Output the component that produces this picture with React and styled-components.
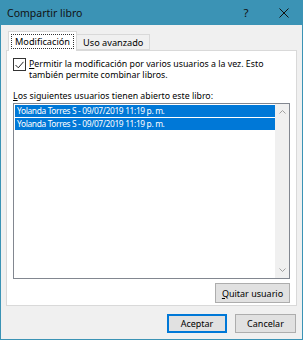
import React from 'react';
import styled, { createGlobalStyle } from 'styled-components';

const Global = createGlobalStyle`
  body {
    margin: 0;
    background: #ffffff;
    font-family: "Noto Sans", "Open Sans", sans-serif;
  }
`;

const Window = styled.div`
  width: 303px;
  height: 340px;
  box-sizing: border-box;
  border: 1px solid #3b93b5;
  border-top: none;
  background: #f0f0f0;
  display: flex;
  flex-direction: column;
  font-size: 8.8px;
  color: #000;
`;

const TitleBar = styled.div`
  height: 25px;
  flex: none;
  background: #3b93b5;
  display: flex;
  align-items: center;
  padding-left: 7px;
  margin: 0 -1px;
`;

const Title = styled.span`
  flex: 1;
  font-size: 10.5px;
  color: #111;
`;

const TitleButton = styled.div`
  width: 38px;
  height: 25px;
  display: flex;
  align-items: center;
  justify-content: center;
  font-size: 11.5px;
  color: #111;
`;

const Body = styled.div`
  padding: 6px 5px 0 5px;
  display: flex;
  flex-direction: column;
`;

const TabRow = styled.div`
  display: flex;
  align-items: flex-end;
  height: 19px;
  flex: none;
  padding-left: 2px;
`;

const Tab = styled.div`
  box-sizing: border-box;
  height: ${p => (p.$active ? '20px' : '16px')};
  margin-bottom: ${p => (p.$active ? '-1px' : '0')};
  padding: ${p => (p.$active ? '3px 3px 0' : '1px 6px 0')};
  background: ${p => (p.$active ? '#ffffff' : '#f0f0f0')};
  border: 1px solid #d9d9d9;
  border-bottom: ${p => (p.$active ? 'none' : '1px solid #d9d9d9')};
  margin-left: ${p => (p.$active ? '0' : '-1px')};
  position: relative;
  z-index: ${p => (p.$active ? 1 : 0)};
  font-size: 9.2px;
  line-height: 13px;
`;

const FocusLabel = styled.span`
  display: inline-block;
  padding: 0 3px;
  height: 13px;
  line-height: 13px;
  outline: 1px dotted #333;
`;

const Panel = styled.div`
  height: 256px;
  flex: none;
  box-sizing: border-box;
  background: #ffffff;
  border: 1px solid #d9d9d9;
  padding: 7px 6px 0 6px;
  display: flex;
  flex-direction: column;
`;

const CheckRow = styled.label`
  display: flex;
  gap: 3px;
  align-items: flex-start;
  height: 22px;
`;

const Box = styled.div`
  width: 11px;
  height: 11px;
  flex: none;
  border: 1px solid #333;
  background: #fff;
  display: flex;
  align-items: center;
  justify-content: center;
`;

const CheckText = styled.div`
  line-height: 11px;
  padding-top: 1px;
`;

const U = styled.span`
  text-decoration: underline;
`;

const ListLabel = styled.div`
  margin-top: 10px;
  height: 12px;
  line-height: 12px;
`;

const ListBox = styled.div`
  margin-top: 1px;
  height: 176px;
  flex: none;
  box-sizing: border-box;
  border: 1px solid #828790;
  display: flex;
  padding: 1px 0 0 1px;
`;

const Rows = styled.div`
  flex: 1;
  display: flex;
  flex-direction: column;
`;

const Row = styled.div`
  height: 12px;
  line-height: 12px;
  margin-bottom: 1px;
  padding-left: 2px;
  font-size: 8.4px;
  letter-spacing: -0.35px;
  background: ${p => (p.$selected ? '#0078d7' : 'transparent')};
  color: ${p => (p.$selected ? '#fff' : '#000')};
  white-space: nowrap;
`;

const ScrollBar = styled.div`
  width: 14px;
  margin-top: -1px;
  background: #f0f0f0;
  display: flex;
  flex-direction: column;
  justify-content: space-between;
  align-items: center;
  padding: 6px 0;
`;

const PanelActions = styled.div`
  display: flex;
  justify-content: flex-end;
  margin-top: 4px;
`;

const Button = styled.div`
  box-sizing: border-box;
  width: ${p => p.$w}px;
  height: ${p => p.$h || 19}px;
  background: #e1e1e1;
  border: 1px solid ${p => (p.$default ? '#0078d7' : '#adadad')};
  box-shadow: ${p => (p.$default ? 'inset 0 0 0 1px #0078d7' : 'none')};
  display: flex;
  align-items: center;
  justify-content: center;
  font-size: 9px;
`;

const Footer = styled.div`
  display: flex;
  justify-content: flex-end;
  gap: 8px;
  padding: 8px 6px 0 0;
`;

const Chevron = ({ up }) => (
  <svg width="7" height="4" viewBox="0 0 7 4">
    <path
      d={up ? 'M0.5 3.5 L3.5 0.5 L6.5 3.5' : 'M0.5 0.5 L3.5 3.5 L6.5 0.5'}
      fill="none"
      stroke="#a0a0a0"
      strokeWidth="1"
    />
  </svg>
);

const users = [
  'Yolanda Torres S - 09/07/2019 11:19 p. m.',
  'Yolanda Torres S - 09/07/2019 11:19 p. m.',
];

export default function App() {
  return (
    <>
      <Global />
      <Window>
        <TitleBar>
          <Title>Compartir libro</Title>
          <TitleButton>?</TitleButton>
          <TitleButton>
            <svg width="10" height="10" viewBox="0 0 10 10">
              <path d="M0.5 0.5 L9.5 9.5 M9.5 0.5 L0.5 9.5" stroke="#111" strokeWidth="1" />
            </svg>
          </TitleButton>
        </TitleBar>
        <Body>
          <TabRow>
            <Tab $active>
              <FocusLabel>Modificación</FocusLabel>
            </Tab>
            <Tab>Uso avanzado</Tab>
          </TabRow>
          <Panel>
            <CheckRow>
              <Box>
                <svg width="9" height="8" viewBox="0 0 9 8">
                  <path d="M0.5 4 L3.3 6.8 L8.5 0.8" fill="none" stroke="#222" strokeWidth="1" />
                </svg>
              </Box>
              <CheckText>
                <U>P</U>ermitir la modificación por varios usuarios a la vez. Esto
                <br />
                también permite combinar libros.
              </CheckText>
            </CheckRow>
            <ListLabel>
              <U>L</U>os siguientes usuarios tienen abierto este libro:
            </ListLabel>
            <ListBox>
              <Rows>
                {users.map((u, i) => (
                  <Row key={i} $selected>{u}</Row>
                ))}
              </Rows>
              <ScrollBar>
                <Chevron up />
                <Chevron />
              </ScrollBar>
            </ListBox>
            <PanelActions>
              <Button $w={75} $h={20}>
                <span><U>Q</U>uitar usuario</span>
              </Button>
            </PanelActions>
          </Panel>
        </Body>
        <Footer>
          <Button $w={60} $default>Aceptar</Button>
          <Button $w={61}>Cancelar</Button>
        </Footer>
      </Window>
    </>
  );
}
